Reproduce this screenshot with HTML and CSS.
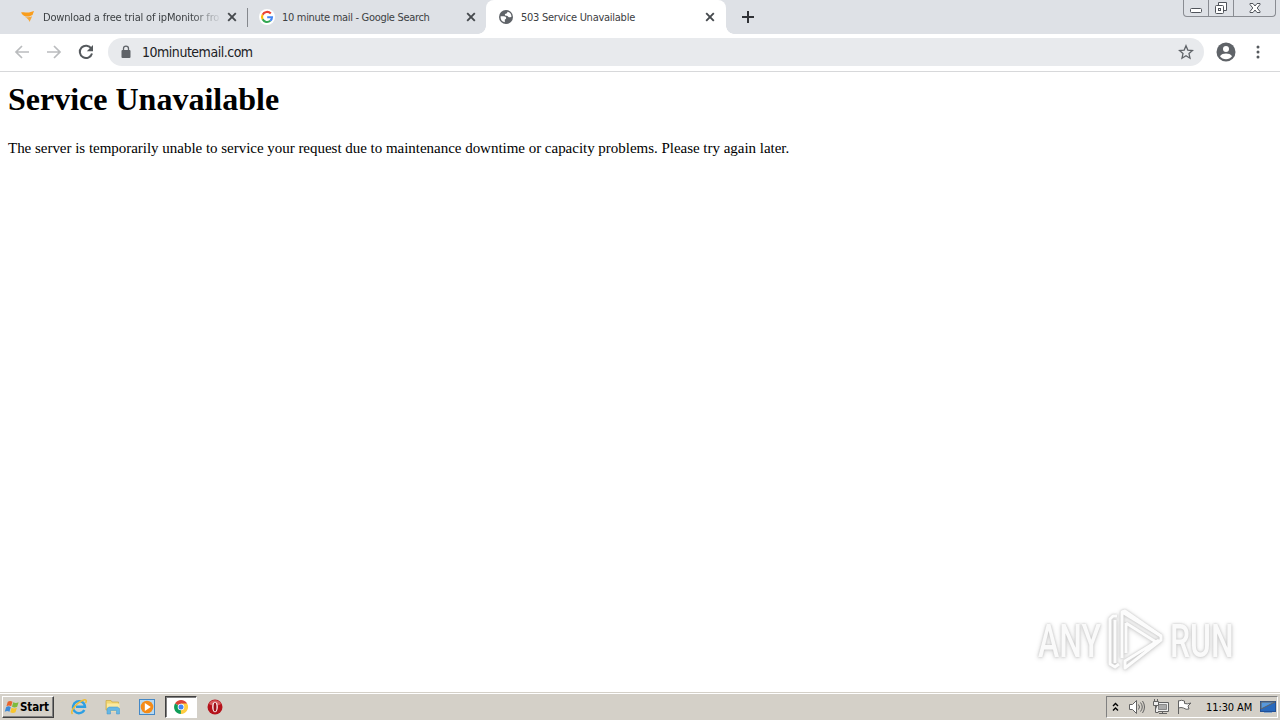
FILE: index.html
```
<!DOCTYPE html>
<html lang="en">
<head>
    <meta charset="UTF-8">
    <title>503 Service Unavailable</title>
    <link rel="stylesheet" href="styles.css">
</head>
<body>
    <div class="tabstrip">
        <div class="tab">
            <svg class="favicon" viewBox="0 0 16 16">
                <path d="M1 3.500c3-.8 5 .2 8 0l5-1.500-1.500 4-3.500 1.500C6 8 3 7 1 3.500z" fill="#f99d1c"/>
                <path d="M5 8c2 .6 4 .3 7-.8-.5 2.300-1.500 3.300-2.500 5.800C9 11 7.500 9 5 8z" fill="#f5a83a"/>
            </svg>
            <span class="tab-title faded title-download">Download a free trial of ipMonitor fro</span>
            <svg class="close" viewBox="0 0 10 10"><path d="M1.200 1.200l7.600 7.600M8.800 1.200L1.200 8.800"/></svg>
        </div>
        <div class="tab divided">
            <svg class="favicon" viewBox="0 0 16 16">
                <circle cx="8" cy="8" r="8" fill="#fff"/>
                <g fill="none" stroke-width="2.100">
                    <path d="M11.800 4.500A5 5 0 0 0 3.600 5.700" stroke="#ea4335"/>
                    <path d="M3.600 5.700a5 5 0 0 0 0 4.600" stroke="#fbbc05"/>
                    <path d="M3.600 10.300a5 5 0 0 0 7.700 1.500" stroke="#34a853"/>
                    <path d="M11.300 11.800A5 5 0 0 0 13 8.200H8.200" stroke="#4285f4"/>
                </g>
            </svg>
            <span class="tab-title title-search">10 minute mail - Google Search</span>
            <svg class="close" viewBox="0 0 10 10"><path d="M1.200 1.200l7.600 7.600M8.800 1.200L1.200 8.800"/></svg>
        </div>
        <div class="tab active">
            <svg class="favicon" viewBox="0 0 16 16">
                <circle cx="8" cy="8" r="7" fill="#5f6368"/>
                <path d="M9.500 2.700c-.2 1.300-.8 1.900-1.800 2-.9.100-1 .6-.7 1.200.3.700 1 .9 1.800.9.900.1 1 .8 1.600 1.200.8.500 1.800.3 3.100-.3a5.500 5.500 0 0 0-4-5z" fill="#fff"/>
                <path d="M2.600 7.200h3.300c1.500 0 2.300.8 2.300 1.900 0 .9-.6 1.300-1.400 1.300v2.900a5.600 5.600 0 0 1-4.200-6.100z" fill="#fff"/>
            </svg>
            <span class="tab-title title-active">503 Service Unavailable</span>
            <svg class="close" viewBox="0 0 10 10"><path d="M1.200 1.200l7.600 7.600M8.800 1.200L1.200 8.800"/></svg>
        </div>
        <svg class="new-tab" viewBox="0 0 12 12"><path d="M6 0v12M0 6h12"/></svg>
        <div class="window-buttons">
            <div class="window-button">
                <svg viewBox="0 0 14 14"><rect x="1.500" y="7.500" width="11" height="4" rx="1"/></svg>
            </div>
            <div class="window-button">
                <svg viewBox="0 0 14 14"><path d="M4.500 4.500v-3h8v8h-3"/><rect x="1.500" y="4.500" width="8" height="8" rx="1"/><rect x="4.500" y="7.500" width="2" height="2"/></svg>
            </div>
            <div class="window-button wide">
                <svg viewBox="0 0 14 14"><path d="M2 2.500h3l2 2.500 2-2.500h3v1L9.200 7l2.800 3.500v1H9L7 9l-2 2.500H2v-1L4.800 7 2 3.500z"/></svg>
            </div>
        </div>
    </div>

    <div class="toolbar">
        <svg class="nav disabled" viewBox="0 0 16 16"><path d="M15 8H2M8 2L2 8l6 6"/></svg>
        <svg class="nav disabled" viewBox="0 0 16 16"><path d="M1 8h13M8 2l6 6-6 6"/></svg>
        <svg class="nav" viewBox="0 0 16 16"><path d="M13.300 4.600A6.200 6.200 0 1 0 14 9.500"/><path d="M15 1v6.200H8.800z" class="solid"/></svg>
        <div class="omnibox">
            <svg class="lock" viewBox="0 0 10 14"><rect x="0.500" y="5" width="9" height="8" rx="1"/><path d="M2.500 5.500V3.600a2.500 2.500 0 0 1 5 0v1.900" fill="none" stroke="#5f6368" stroke-width="1.300"/></svg>
            <span class="url">10minutemail.com</span>
            <svg class="star" viewBox="0 0 16 16"><path d="M8 1.800l1.800 4.300 4.700.4-3.500 3.100 1 4.600L8 11.800l-4 2.400 1-4.600L1.500 6.500l4.700-.4z"/></svg>
        </div>
        <svg class="avatar" viewBox="0 0 20 20">
            <circle cx="10" cy="10" r="9.500" fill="#5f6368"/>
            <circle cx="10" cy="6.900" r="3" fill="#fff"/>
            <path d="M4 14.200c1-2 3.800-2.700 6-2.700s5 .7 6 2.700c-1.400 1.900-3.500 3-6 3s-4.600-1.100-6-3z" fill="#fff"/>
        </svg>
        <svg class="menu" viewBox="0 0 4 14"><circle cx="2" cy="2" r="1.500"/><circle cx="2" cy="7" r="1.500"/><circle cx="2" cy="12" r="1.500"/></svg>
    </div>

    <div class="page">
        <h1>Service Unavailable</h1>
        <p>The server is temporarily unable to service your request due to maintenance downtime or capacity problems. Please try again later.</p>
        <div class="watermark">
            <span>ANY</span>
            <svg viewBox="0 0 60 64">
                <path d="M16 50V4l39 24v4L19 60v-7l34-21"/>
                <path d="M16 4l3-1 36 25M20 15l30 19M20 15v30M11 8H7L4 11v45l5 3 4-3M9 12v43"/>
            </svg>
            <span>RUN</span>
        </div>
    </div>

    <div class="taskbar">
        <div class="start">
            <svg viewBox="0 0 17 16">
                <path d="M4 2.500c2-1.400 3.500-1 5 0L7.600 7.300c-1.600-1-3-1.200-5 0z" fill="#e8642c"/>
                <path d="M9.800 3c1.800 1 3.500 1.200 5.700 0L14 7.800c-2 1.200-3.600 1-5.500 0z" fill="#7dbb3c"/>
                <path d="M2.200 8.200c2-1.300 3.500-1 5 0L5.800 13c-1.600-1-3-1.200-5 0z" fill="#3c8ad8"/>
                <path d="M8 8.700c1.800 1 3.500 1.200 5.700 0l-1.500 4.800c-2 1.200-3.600 1-5.500 0z" fill="#f8c52c"/>
            </svg>
            <span>Start</span>
        </div>
        <div class="quick-launch">
            <div class="launch">
                <svg viewBox="0 0 18 18">
                    <path d="M14.300 12A6 6 0 1 1 15 8.800H6" fill="none" stroke="#2d9fe3" stroke-width="2.400"/>
                    <path d="M2.500 16C-.5 13 7.500 3.500 14.500 1.700c2.300-.3 2 1.700 1 3.300" fill="none" stroke="#efbd35" stroke-width="1.500"/>
                </svg>
            </div>
            <div class="launch">
                <svg viewBox="0 0 18 18">
                    <path d="M2 2.500h5l1 1.500h6.500v8H2z" fill="#f1d671" stroke="#c8a744" stroke-width=".7"/>
                    <path d="M3 5.500h12.500v8H3z" fill="#fae9a0"/>
                    <path d="M3 16v-5.500l2-1.500h8.500l2 1.500V16h-3v-3.500h-6V16z" fill="#65b7e5" stroke="#4295c9" stroke-width=".5"/>
                </svg>
            </div>
            <div class="launch">
                <svg viewBox="0 0 18 18">
                    <rect x="1.500" y="1.500" width="15" height="15" fill="#b6d9f2" stroke="#4488c6"/>
                    <circle cx="9" cy="9" r="6.300" fill="#f48b18"/>
                    <path d="M6.800 5l6 4-6 4z" fill="#fff"/>
                </svg>
            </div>
            <div class="launch pressed">
                <svg viewBox="0 0 18 18">
                    <path d="M9 9L3 5.500A7 7 0 0 1 15.100 5.500z" fill="#db4437"/>
                    <path d="M9 9L3 5.500A7 7 0 0 0 8.800 16L12 10.800z" fill="#0f9d58"/>
                    <path d="M9 9l-.2 7A7 7 0 0 0 15.100 5.500H9z" fill="#ffcd40"/>
                    <circle cx="9" cy="9" r="3.300" fill="#fff"/>
                    <circle cx="9" cy="9" r="2.500" fill="#4285f4"/>
                </svg>
            </div>
            <div class="launch">
                <svg viewBox="0 0 18 18">
                    <circle cx="9" cy="9" r="7.500" fill="#b5121b"/>
                    <path d="M3 6a6.700 6.700 0 0 1 12 0c-3 2-9 2-12 0z" fill="#d75a5c"/>
                    <ellipse cx="9" cy="9" rx="2.800" ry="5.200" fill="#fff"/>
                    <ellipse cx="9" cy="9" rx="1.500" ry="4.600" fill="#9f1018"/>
                </svg>
            </div>
        </div>
        <div class="tray">
            <svg class="chevrons" viewBox="0 0 7 10"><path d="M1 4l2.500-2.500L6 4M1 8.500L3.500 6 6 8.500"/></svg>
            <svg class="speaker" viewBox="0 0 18 16"><path d="M1.500 5.500h3l4-4v13l-4-4h-3z" fill="#fff"/><path d="M10.500 5.500q2 2.500 0 5M12.500 3.500q3.500 4.500 0 9M14.500 2q4 6 0 12"/></svg>
            <svg class="network" viewBox="0 0 18 16"><path d="M4.500 3.500h12v9h-12z" fill="#eee"/><path d="M6.500 5.500h8v5h-8z" fill="#aaa" stroke="#888"/><path d="M7 14.500h8M10.500 12.500v2M1.500 2.500h5v4h-5zM2.500 0v2M5.500 0v2M3.500 6.500v7h3" fill="#eee"/></svg>
            <svg class="flag" viewBox="0 0 18 16"><path d="M2.500 15V1.500M2.500 2q3-1.500 6 0v2.500q3 1 6.500-.5l-3 3 1 3q-3 1-5.500-1-2.500-1-5 0z" fill="#fff"/></svg>
            <span class="clock">11:30 AM</span>
            <svg class="desktop" viewBox="0 0 16 14"><rect x=".5" y="1.500" width="15" height="10" fill="#2869bd" stroke="#245094"/><path d="M1 2h14L1 9z" fill="#5798dc"/><path d="M4 12.500h8" stroke="#83a5cc"/></svg>
        </div>
    </div>
</body>
</html>
```

FILE: styles.css
```
body {
    margin: 0;
    height: 720px;
    display: flex;
    flex-direction: column;
    overflow: hidden;
    background-color: #fff;
    font-family: "DejaVu Sans Condensed", "DejaVu Sans", sans-serif;
    font-size: 11px;
    color: #3c4043;
}

svg {
    display: block;
    flex: none;
}

/* Tabs */
.tabstrip {
    display: flex;
    height: 34px;
    padding-left: 8px;
    background-color: #dee1e6;
}

.tab {
    position: relative;
    box-sizing: border-box;
    display: flex;
    align-items: center;
    width: 239px;
    padding: 0 10px 0 12px;
}

.tab.divided::before {
    content: "";
    position: absolute;
    left: 0;
    top: 8px;
    width: 1px;
    height: 19px;
    background-color: #85888d;
}

.tab.active {
    width: 240px;
    padding-right: 11px;
    background-color: #fff;
    border-radius: 8px 8px 0 0;
}

/* Curved feet of the selected tab */
.tab.active::before,
.tab.active::after {
    content: "";
    position: absolute;
    bottom: 0;
    width: 8px;
    height: 8px;
}

.tab.active::before {
    left: -8px;
    background: radial-gradient(circle at 0 0, transparent 7.5px, #fff 8px);
}

.tab.active::after {
    right: -8px;
    background: radial-gradient(circle at 100% 0, transparent 7.5px, #fff 8px);
}

.favicon {
    width: 16px;
    height: 16px;
    margin-right: 7px;
}

.tab-title {
    flex: 1;
    white-space: nowrap;
    margin-right: 4px;
}

.title-download {
    letter-spacing: -0.17px;
}

.title-search {
    letter-spacing: -0.31px;
}

.title-active {
    letter-spacing: -0.26px;
}

.faded {
    -webkit-mask-image: linear-gradient(to right, #000 148px, transparent 179px);
    mask-image: linear-gradient(to right, #000 148px, transparent 179px);
}

.close {
    width: 10px;
    height: 10px;
    stroke: #45494d;
    stroke-width: 1.9;
}

.new-tab {
    width: 12px;
    height: 12px;
    margin: 11px 0 0 16px;
    stroke: #303236;
    stroke-width: 2;
}

.window-buttons {
    display: flex;
    box-sizing: border-box;
    width: 93px;
    height: 17px;
    margin: 0 4px 0 auto;
    border: 1px solid #898c92;
    border-top: none;
    border-radius: 0 0 4px 4px;
}

.window-button {
    display: flex;
    justify-content: center;
    width: 24px;
    border-right: 1px solid #898c92;
}

.window-button.wide {
    flex: 1;
    border-right: none;
}

.window-button svg {
    width: 14px;
    height: 14px;
    margin-top: 1px;
    fill: #fff;
    stroke: #50545b;
}

/* Toolbar */
.toolbar {
    display: flex;
    align-items: center;
    box-sizing: border-box;
    height: 38px;
    padding: 0 20px 2px 14px;
    border-bottom: 1px solid #d7d8da;
}

.nav {
    width: 16px;
    height: 16px;
    margin-right: 16px;
    fill: none;
    stroke: #55595d;
    stroke-width: 2;
}

.nav.disabled {
    stroke: #babcbe;
    stroke-width: 1.7;
}

.nav:nth-child(3) {
    margin-right: 14px;
}

.nav .solid {
    fill: #55595d;
    stroke: none;
}

.omnibox {
    box-sizing: border-box;
    display: flex;
    align-items: center;
    flex: none;
    width: 1096px;
    height: 28px;
    padding: 0 10px 0 13px;
    border-radius: 14px;
    background-color: #e8eaed;
}

.lock {
    width: 10px;
    height: 14px;
    margin-right: 11px;
    fill: #5f6368;
}

.url {
    flex: 1;
    font-size: 14px;
    letter-spacing: -0.48px;
    color: #202124;
}

.star {
    width: 16px;
    height: 16px;
    fill: none;
    stroke: #5f6368;
    stroke-width: 1.3;
}

.avatar {
    width: 20px;
    height: 20px;
    margin-left: 12px;
}

.menu {
    width: 4px;
    height: 14px;
    margin-left: auto;
    fill: #55595d;
}

/* Page content */
.page {
    position: relative;
    flex: 1;
    padding: 9px 8px 8px;
    font-family: "Liberation Serif", serif;
    font-size: 16px;
    color: #000;
}

h1 {
    margin: 0 0 21px;
    font-size: 32px;
    line-height: 37px;
}

p {
    margin: 0;
    font-size: 15px;
    line-height: 18px;
    letter-spacing: -0.024px;
    white-space: nowrap;
}

.watermark {
    position: absolute;
    left: 1038px;
    bottom: 18px;
    display: flex;
    align-items: center;
    gap: 4px;
    font-family: Roboto, sans-serif;
    font-size: 47px;
    font-weight: 500;
    line-height: 66px;
    color: #fafafa;
    filter: drop-shadow(0 0 1px #c4c4c4) drop-shadow(0 1px 2px #d8d8d8);
}

.watermark span {
    width: 64px;
    padding-top: 3px;
    transform: scaleX(0.68);
    transform-origin: left;
}

.watermark svg {
    width: 60px;
    height: 64px;
    fill: none;
    stroke: #fcfcfc;
    stroke-width: 3;
    stroke-linejoin: round;
}

/* Taskbar */
.taskbar {
    box-sizing: border-box;
    display: flex;
    align-items: center;
    height: 28px;
    padding: 1px 2px 1px;
    border-top: 1px solid #d4d0c8;
    background-color: #d4d0c8;
    box-shadow: inset 0 1px #fff;
    color: #000;
}

.start {
    box-sizing: border-box;
    display: flex;
    align-items: center;
    width: 52px;
    height: 22px;
    padding-left: 1px;
    border: 1px solid;
    border-color: #fff #404040 #404040 #fff;
    box-shadow: inset -1px -1px #808080;
    font-size: 11.5px;
    font-weight: bold;
    letter-spacing: -0.1px;
}

.start svg {
    width: 16px;
    height: 16px;
}

.quick-launch {
    display: flex;
    margin-left: 9px;
}

.launch {
    box-sizing: border-box;
    display: flex;
    align-items: center;
    justify-content: center;
    width: 32px;
    height: 22px;
    margin-right: 2px;
}

.launch.pressed {
    border: 1px solid;
    border-color: #404040 #fff #fff #404040;
    background-color: #fff;
    box-shadow: inset 1px 1px #808080;
}

.launch svg {
    width: 18px;
    height: 18px;
}

.tray {
    box-sizing: border-box;
    display: flex;
    align-items: center;
    width: 172px;
    height: 22px;
    margin-left: auto;
    padding-left: 5px;
    border: 1px solid;
    border-color: #808080 #fff #fff #808080;
}

.tray svg {
    fill: none;
    stroke: #626262;
}

.tray .chevrons {
    width: 7px;
    height: 10px;
    margin-right: 9px;
    stroke: #000;
    stroke-width: 1.4;
}

.speaker,
.network,
.flag {
    width: 18px;
    height: 16px;
    margin-right: 6px;
}

.clock {
    margin-left: 6px;
    padding-top: 1px;
    white-space: nowrap;
    letter-spacing: -0.1px;
}

.tray .desktop {
    width: 16px;
    height: 14px;
    margin: 0 1px 0 auto;
}
```
